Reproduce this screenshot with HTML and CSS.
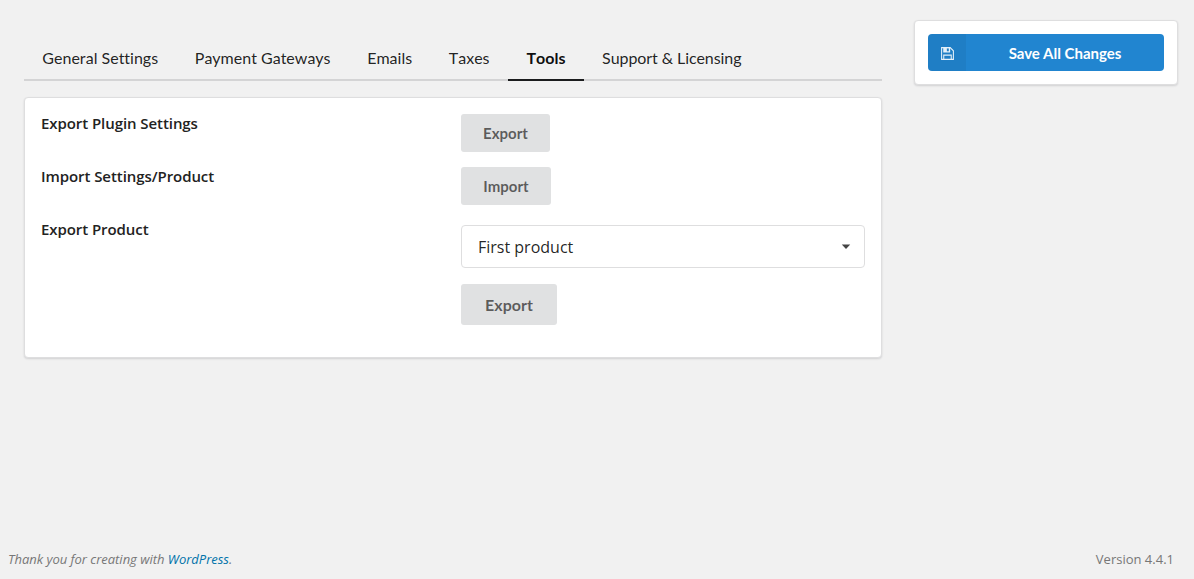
FILE: index.html
```
<!DOCTYPE html>
<html lang="en">
<head>
<meta charset="utf-8">
<title>Settings</title>
<link rel="stylesheet" href="styles.css">
</head>
<body>
<div class="page">
  <div class="layout">
    <main class="main">
      <nav class="tabs">
        <a class="tab">General Settings</a>
        <a class="tab">Payment Gateways</a>
        <a class="tab">Emails</a>
        <a class="tab">Taxes</a>
        <a class="tab active">Tools</a>
        <a class="tab last">Support &amp; Licensing</a>
      </nav>
      <section class="panel">
        <div class="row"><div class="label">Export Plugin Settings</div><button class="btn">Export</button></div>
        <div class="row"><div class="label">Import Settings/Product</div><button class="btn import">Import</button></div>
        <div class="row"><div class="label">Export Product</div>
          <div class="field">
            <div class="select"><span>First product</span><svg class="caret" viewBox="0 0 10 6"><path d="M0.8 0.5h8.4L5 5z"/></svg></div>
            <button class="btn large">Export</button>
          </div>
        </div>
      </section>
    </main>
    <aside class="side">
      <button class="save">
        <span class="save-icon"><svg viewBox="0 0 14 14"><path d="M1.5 1.5h8l3 3v8h-11z"/><path d="M3.5 12.5v-4h7v4"/><path class="solid" fill-rule="evenodd" d="M3 1h6.5v5H3zM6.4 2v3h1.8V2z"/></svg></span>
        <span class="save-text">Save All Changes</span>
      </button>
    </aside>
  </div>
  <footer class="footer"><p class="thanks">Thank you for creating with <a>WordPress</a>.</p><p>Version 4.4.1</p></footer>
</div>
</body>
</html>
```
FILE: styles.css
```
* { box-sizing: border-box; }
body { margin: 0; background: #f1f1f1; font-family: "Open Sans", sans-serif; }
.page { height: 579px; display: flex; flex-direction: column; justify-content: space-between; overflow: hidden; }
.layout { display: flex; align-items: flex-start; padding: 20px 16px 0 24px; gap: 32px; }
.main { width: 858px; padding-top: 18px; }
.tabs { display: flex; height: 43px; border-bottom: 2px solid #d4d4d5; }
.tab { height: 43px; padding: 10px 18.35px 0; font: 16px/20px Lato, sans-serif; font-kerning: none; font-variant-ligatures: none; color: rgba(0,0,0,.87); border-bottom: 2px solid transparent; white-space: nowrap; }
.tab.active { padding: 10px 18.6px 0; font-weight: 700; color: rgba(0,0,0,.95); border-color: #1b1c1d; }
.tab.last { padding-left: 18px; letter-spacing: -.08px; }
.panel { margin-top: 16px; height: 261px; padding: 16px; background: #fff; border: 1px solid #dededf; border-radius: 4px; box-shadow: 0 1px 2px rgba(34,36,38,.15); }
.row { display: flex; height: 53px; }
.label { width: 420px; margin-top: -1px; font-size: 15px; line-height: 20px; letter-spacing: -.07px; font-weight: 600; color: #222; }
.btn { display: block; width: 89px; height: 38px; padding: 0; border: 0; border-radius: 3px; background: #e0e1e2; color: rgba(0,0,0,.6); font: 700 15px/38px Lato, sans-serif; font-kerning: none; }
.btn.import { width: 90px; }
.btn.large { width: 96px; height: 41px; margin-top: 16px; font-size: 16px; line-height: 41px; }
.field { padding-top: 5px; }
.select { width: 404px; height: 43px; padding: 0 13px 0 16px; display: flex; align-items: center; justify-content: space-between; border: 1px solid #dededf; border-radius: 4px; font-size: 16px; color: rgba(0,0,0,.87); }
.caret { width: 10px; height: 6px; fill: #444; }
.side { width: 264px; height: 65px; padding: 13px; background: #fff; border: 1px solid #dededf; border-radius: 4px; box-shadow: 0 1px 2px rgba(34,36,38,.15); }
.save { display: flex; width: 236px; height: 37px; padding: 0; border: 0; border-radius: 4px; background: #2185d0; color: #fff; overflow: hidden; font: 700 15px/37px Lato, sans-serif; }
.save-icon { width: 38px; height: 37px; padding: 12px 0 0 12px; background: rgba(0,0,0,.05); }
.save-icon svg { display: block; width: 15px; height: 15px; fill: none; stroke: #e4f0f9; stroke-width: 1; }
.save-icon .solid { fill: #e4f0f9; stroke: none; }
.save-text { flex: 1; padding-top: 1px; text-align: center; }
.footer { display: flex; justify-content: space-between; padding: 0 20px 10px 8px; font-size: 13px; line-height: 20px; color: #777; }
.footer p { margin: 0; }
.thanks { font-style: italic; letter-spacing: -.02px; }
.thanks a { color: #0073aa; }
```
